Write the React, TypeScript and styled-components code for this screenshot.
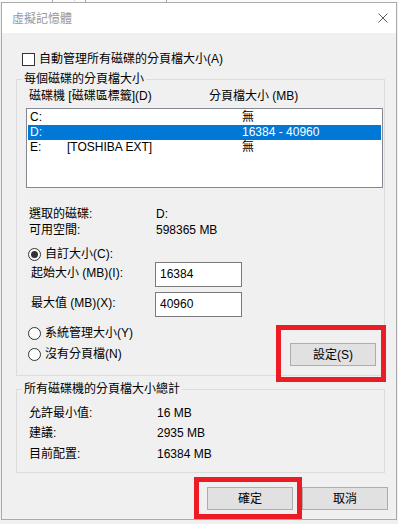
import styled, { createGlobalStyle } from 'styled-components';

const GlobalStyle = createGlobalStyle`
  html, body {
    margin: 0;
    padding: 0;
    background: #f0f0f0;
  }
  body {
    font-family: "Liberation Sans", "Noto Sans CJK TC", sans-serif;
    font-size: 12px;
    line-height: 16px;
    color: #000;
  }
  * { box-sizing: border-box; }
`;

const drives = [
  { id: 'C:', label: '', size: '無' },
  { id: 'D:', label: '', size: '16384 - 40960', selected: true },
  { id: 'E:', label: '[TOSHIBA EXT]', size: '無' },
];

const App = () => {
  return (
    <Page>
      <GlobalStyle />
      <BackTabs>
        <BackTabsInner>
          <BackTab>視覺效果</BackTab>
          <BackTab>進階</BackTab>
          <BackTab>資料執行防止</BackTab>
        </BackTabsInner>
      </BackTabs>
      <Dialog>
        <TitleBar>
          <Title>虛擬記憶體</Title>
          <CloseIcon width='10' height='10' viewBox='0 0 10 10'>
            <path d='M0.5 0.5 L9.5 9.5 M9.5 0.5 L0.5 9.5' stroke='#5c5c5c' strokeWidth='1' fill='none' />
          </CloseIcon>
        </TitleBar>
        <Body>
          <CheckRow>
            <CheckBox />
            <span>自動管理所有磁碟的分頁檔大小(A)</span>
          </CheckRow>

          <Group>
            <GroupTitle>每個磁碟的分頁檔大小</GroupTitle>
            <HeaderRow>
              <span>磁碟機 [磁碟區標籤](D)</span>
              <span>分頁檔大小 (MB)</span>
            </HeaderRow>
            <ListBox>
              {drives.map((d) => (
                <DriveRow key={d.id} $selected={!!d.selected}>
                  <span>{d.id}</span>
                  <span>{d.label}</span>
                  <span>{d.size}</span>
                </DriveRow>
              ))}
            </ListBox>

            <InfoBlock>
              <InfoRow $col={127}>
                <span>選取的磁碟:</span>
                <span>D:</span>
              </InfoRow>
              <InfoRow $col={127}>
                <span>可用空間:</span>
                <span>598365 MB</span>
              </InfoRow>
            </InfoBlock>

            <RadioRow $top={8}>
              <Radio $checked />
              <span>自訂大小(C):</span>
            </RadioRow>
            <FieldRow $top={0}>
              <FieldLabel>起始大小 (MB)(I):</FieldLabel>
              <TextBox>16384</TextBox>
            </FieldRow>
            <FieldRow $top={5}>
              <FieldLabel>最大值 (MB)(X):</FieldLabel>
              <TextBox>40960</TextBox>
            </FieldRow>

            <BottomRow>
              <RadioColumn>
                <RadioRow $top={0}>
                  <Radio />
                  <span>系統管理大小(Y)</span>
                </RadioRow>
                <RadioRow $top={0}>
                  <Radio />
                  <span>沒有分頁檔(N)</span>
                </RadioRow>
              </RadioColumn>
              <SetMark>
                <Button>設定(S)</Button>
              </SetMark>
            </BottomRow>
          </Group>

          <Group2>
            <GroupTitle>所有磁碟機的分頁檔大小總計</GroupTitle>
            <InfoRow $col={128} $top={8}>
              <span>允許最小值:</span>
              <span>16 MB</span>
            </InfoRow>
            <InfoRow $col={128} $top={4}>
              <span>建議:</span>
              <span>2935 MB</span>
            </InfoRow>
            <InfoRow $col={128} $top={5}>
              <span>目前配置:</span>
              <span>16384 MB</span>
            </InfoRow>
          </Group2>

          <ButtonRow>
            <OkMark>
              <Button>確定</Button>
            </OkMark>
            <Button>取消</Button>
          </ButtonRow>
        </Body>
      </Dialog>
    </Page>
  );
};

export default App;

const Page = styled.div`
  width: 398px;
  height: 524px;
  overflow: hidden;
  background: #f0f0f0;
`;

const BackTabs = styled.div`
  height: 2px;
  overflow: hidden;
  background: #fbfbfb;
`;

const BackTabsInner = styled.div`
  display: flex;
  margin-top: -14px;
  font-family: "Noto Sans CJK TC", sans-serif;
`;

const BackTab = styled.div`
  padding: 0 4px;
  border-right: 1px solid #a0a0a0;
  height: 16px;
  color: #000;
  &:first-child {
    padding-left: 0;
  }
`;

const Dialog = styled.div`
  margin-left: 1px;
  width: 396px;
  height: 518px;
  border: 1px solid #aaaaaa;
  background: #f0f0f0;
  display: flex;
  flex-direction: column;
`;

const TitleBar = styled.div`
  height: 30px;
  flex-shrink: 0;
  background: #fff;
  display: flex;
  align-items: center;
  padding: 0 8px 0 10px;
`;

const Title = styled.div`
  color: #9a9a9a;
  font-family: "Noto Sans CJK TC", sans-serif;
`;

const CloseIcon = styled.svg`
  margin-left: auto;
  display: block;
`;

const Body = styled.div`
  padding: 18px 8px 0 14px;
  display: flex;
  flex-direction: column;
`;

const CheckRow = styled.div`
  display: flex;
  align-items: center;
  gap: 4px;
  margin-left: 6px;
  height: 16px;
`;

const CheckBox = styled.span`
  width: 13px;
  height: 13px;
  border: 1px solid #333;
  background: #fff;
  flex-shrink: 0;
`;

const Group = styled.div`
  margin: 12px 3px 0 0;
  border: 1px solid #dcdcdc;
  padding: 0 1px 9px 9px;
  display: flex;
  flex-direction: column;
`;

const Group2 = styled(Group)`
  margin-top: 13px;
  padding-bottom: 10px;
`;

const GroupTitle = styled.div`
  align-self: flex-start;
  margin: -9px 0 0 -4px;
  padding: 0 2px;
  height: 16px;
  background: #f0f0f0;
`;

const HeaderRow = styled.div`
  display: grid;
  grid-template-columns: 180px 1fr;
  margin-top: 1px;
  padding-left: 3px;
  height: 16px;
`;

const ListBox = styled.div`
  margin-top: 4px;
  height: 80px;
  border: 1px solid #828790;
  background: #fff;
  padding: 1px;
`;

const DriveRow = styled.div<{ $selected: boolean }>`
  display: grid;
  grid-template-columns: 37px 175px 1fr;
  height: 15px;
  line-height: 15px;
  padding-left: 2px;
  background: ${(p) => (p.$selected ? '#0078d7' : 'transparent')};
  color: ${(p) => (p.$selected ? '#fff' : '#000')};
`;

const InfoBlock = styled.div`
  margin-top: 18px;
`;

const InfoRow = styled.div<{ $col: number; $top?: number }>`
  display: grid;
  grid-template-columns: ${(p) => p.$col}px 1fr;
  padding-left: 3px;
  height: 16px;
  margin-top: ${(p) => p.$top ?? 0}px;
`;

const RadioRow = styled.div<{ $top: number }>`
  display: flex;
  align-items: center;
  gap: 4px;
  height: 16px;
  padding-left: 2px;
  margin-top: ${(p) => p.$top}px;
`;

const Radio = styled.span<{ $checked?: boolean }>`
  width: 13px;
  height: 13px;
  border-radius: 50%;
  border: 1px solid #333;
  background: #fff;
  flex-shrink: 0;
  display: flex;
  align-items: center;
  justify-content: center;
  &::before {
    content: '';
    width: 7px;
    height: 7px;
    border-radius: 50%;
    background: ${(p) => (p.$checked ? '#333' : 'transparent')};
  }
`;

const FieldRow = styled.div<{ $top: number }>`
  display: flex;
  align-items: flex-start;
  margin-top: ${(p) => p.$top}px;
`;

const FieldLabel = styled.div`
  width: 129px;
  padding: 3px 0 0 5px;
`;

const TextBox = styled.div`
  width: 87px;
  height: 25px;
  border: 1px solid #7a7a7a;
  background: #fff;
  padding: 3px 4px;
`;

const BottomRow = styled.div`
  display: flex;
  justify-content: space-between;
  align-items: flex-start;
  margin-top: 8px;
`;

const RadioColumn = styled.div`
  display: flex;
  flex-direction: column;
  gap: 5px;
`;

const Button = styled.div`
  width: 86px;
  height: 23px;
  border: 1px solid #adadad;
  background: #e1e1e1;
  display: flex;
  align-items: center;
  justify-content: center;
`;

const Mark = styled.div`
  position: relative;
  &::after {
    content: '';
    position: absolute;
    border: 5px solid #ed1c24;
    pointer-events: none;
  }
`;

const SetMark = styled(Mark)`
  margin: 18px 7px 0 0;
  &::after {
    top: -18px;
    left: -14px;
    right: -10px;
    bottom: -16px;
  }
`;

const OkMark = styled(Mark)`
  &::after {
    top: -10px;
    left: -13px;
    right: -9px;
    bottom: -9px;
  }
`;

const ButtonRow = styled.div`
  display: flex;
  justify-content: flex-end;
  gap: 9px;
  margin-top: 14px;
`;
